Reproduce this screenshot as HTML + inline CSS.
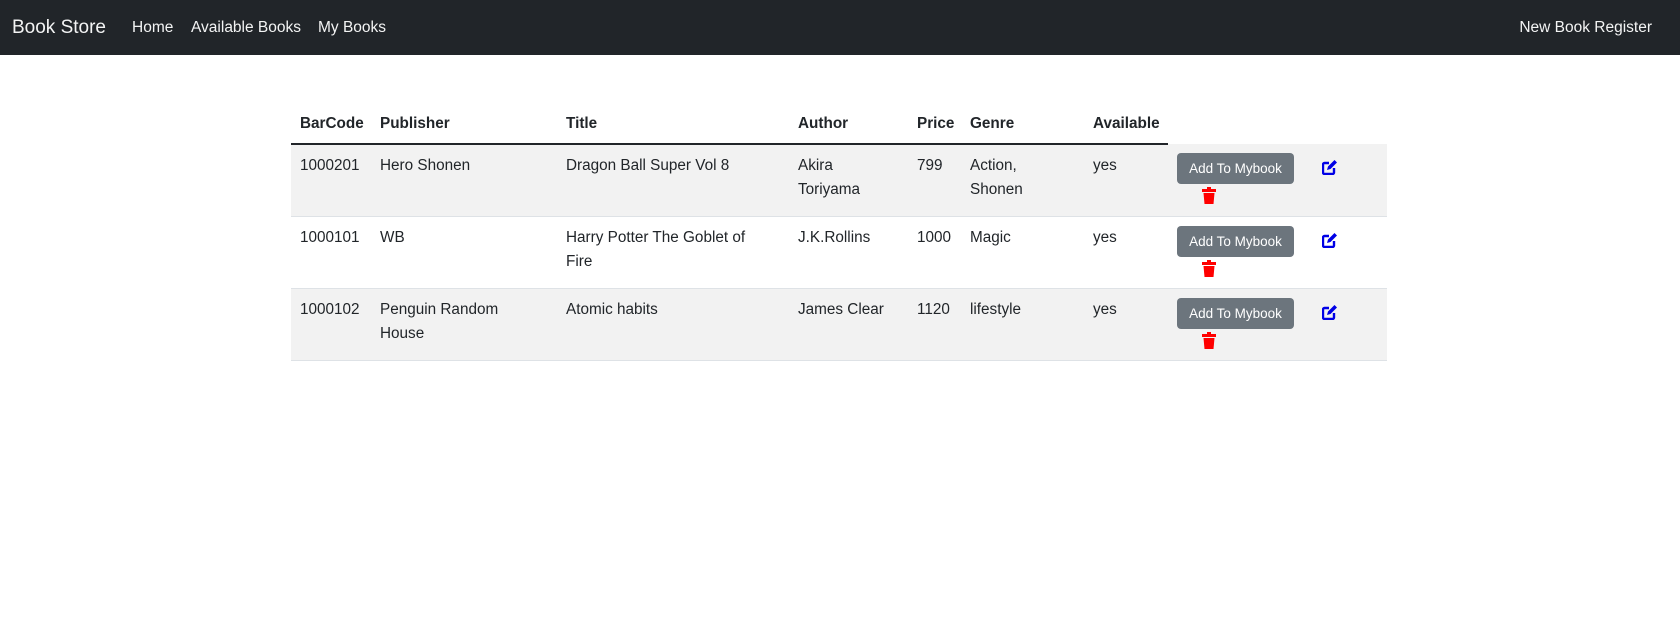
<!DOCTYPE html>
<html><head><meta charset="utf-8"><style>
body{margin:0;font-family:"Liberation Sans",sans-serif;color:#212529;background:#fff;width:1680px;height:640px;overflow:hidden}
.nav{height:55px;background:#212529;position:relative;color:#fff}
.nav span{position:absolute;top:0;line-height:55px;font-size:15.5px;color:rgba(255,255,255,.95)}
.brand{left:12px;font-size:19px!important}
table{position:absolute;left:291px;top:104px;width:1096px;border-collapse:collapse;table-layout:fixed;font-size:15.3px}
th{text-align:left;padding:8px 9px 7px;height:23px;line-height:24px;font-weight:bold;border-bottom:2px solid #212529;vertical-align:bottom;white-space:nowrap}
th.e{border-bottom:none}
td{padding:9px 9px 5px;line-height:24px;vertical-align:top;border-bottom:1px solid #dee2e6;height:57px;white-space:nowrap}
tr.s td{background:#f2f2f2}
.btn{display:inline-block;background:#6c757d;color:#fff;font-size:13.5px;line-height:31px;height:31px;width:117px;text-align:center;border-radius:4px;margin-top:0}
.tr{display:block;margin:3px 0 0 24px;width:16px;height:17px}
.ed{margin-top:6px;display:block}
</style></head><body>
<div class="nav"><span class="brand">Book Store</span><span style="left:132px">Home</span><span style="left:191px">Available Books</span><span style="left:318px">My Books</span><span style="right:28px">New Book Register</span></div>
<table>
<colgroup><col style="width:80px"><col style="width:186px"><col style="width:232px"><col style="width:119px"><col style="width:53px"><col style="width:123px"><col style="width:84px"><col style="width:145px"><col style="width:74px"></colgroup>
<thead><tr><th>BarCode</th><th>Publisher</th><th>Title</th><th>Author</th><th>Price</th><th>Genre</th><th>Available</th><th class="e"></th><th class="e"></th></tr></thead>
<tbody>
<tr class="s"><td>1000201</td><td>Hero Shonen</td><td>Dragon Ball Super Vol 8</td><td>Akira<br>Toriyama</td><td>799</td><td>Action,<br>Shonen</td><td>yes</td><td><span class="btn">Add To Mybook</span><svg class="tr" viewBox="0 0 16 17"><rect x="1" y="2" width="14" height="3" fill="#f00"/><rect x="6" y="0" width="4" height="3" fill="#f00"/><path d="M2.5 6h11l-1 11h-9z" fill="#f00"/></svg></td><td><svg class="ed" width="16" height="16" viewBox="0 0 16 16"><path d="M12 9v4.5a1.5 1.5 0 0 1-1.5 1.5h-8A1.5 1.5 0 0 1 1 13.5v-8A1.5 1.5 0 0 1 2.5 4H7" fill="none" stroke="#0000e6" stroke-width="2.4"/><path d="M5 11l1-3.5 6.5-6.5 2.5 2.5-6.5 6.5z" fill="#0000e6"/></svg></td></tr>
<tr><td>1000101</td><td>WB</td><td>Harry Potter The Goblet of<br>Fire</td><td>J.K.Rollins</td><td>1000</td><td>Magic</td><td>yes</td><td><span class="btn">Add To Mybook</span><svg class="tr" viewBox="0 0 16 17"><rect x="1" y="2" width="14" height="3" fill="#f00"/><rect x="6" y="0" width="4" height="3" fill="#f00"/><path d="M2.5 6h11l-1 11h-9z" fill="#f00"/></svg></td><td><svg class="ed" width="16" height="16" viewBox="0 0 16 16"><path d="M12 9v4.5a1.5 1.5 0 0 1-1.5 1.5h-8A1.5 1.5 0 0 1 1 13.5v-8A1.5 1.5 0 0 1 2.5 4H7" fill="none" stroke="#0000e6" stroke-width="2.4"/><path d="M5 11l1-3.5 6.5-6.5 2.5 2.5-6.5 6.5z" fill="#0000e6"/></svg></td></tr>
<tr class="s"><td>1000102</td><td>Penguin Random<br>House</td><td>Atomic habits</td><td>James Clear</td><td>1120</td><td>lifestyle</td><td>yes</td><td><span class="btn">Add To Mybook</span><svg class="tr" viewBox="0 0 16 17"><rect x="1" y="2" width="14" height="3" fill="#f00"/><rect x="6" y="0" width="4" height="3" fill="#f00"/><path d="M2.5 6h11l-1 11h-9z" fill="#f00"/></svg></td><td><svg class="ed" width="16" height="16" viewBox="0 0 16 16"><path d="M12 9v4.5a1.5 1.5 0 0 1-1.5 1.5h-8A1.5 1.5 0 0 1 1 13.5v-8A1.5 1.5 0 0 1 2.5 4H7" fill="none" stroke="#0000e6" stroke-width="2.4"/><path d="M5 11l1-3.5 6.5-6.5 2.5 2.5-6.5 6.5z" fill="#0000e6"/></svg></td></tr>
</tbody></table>
</body></html>
